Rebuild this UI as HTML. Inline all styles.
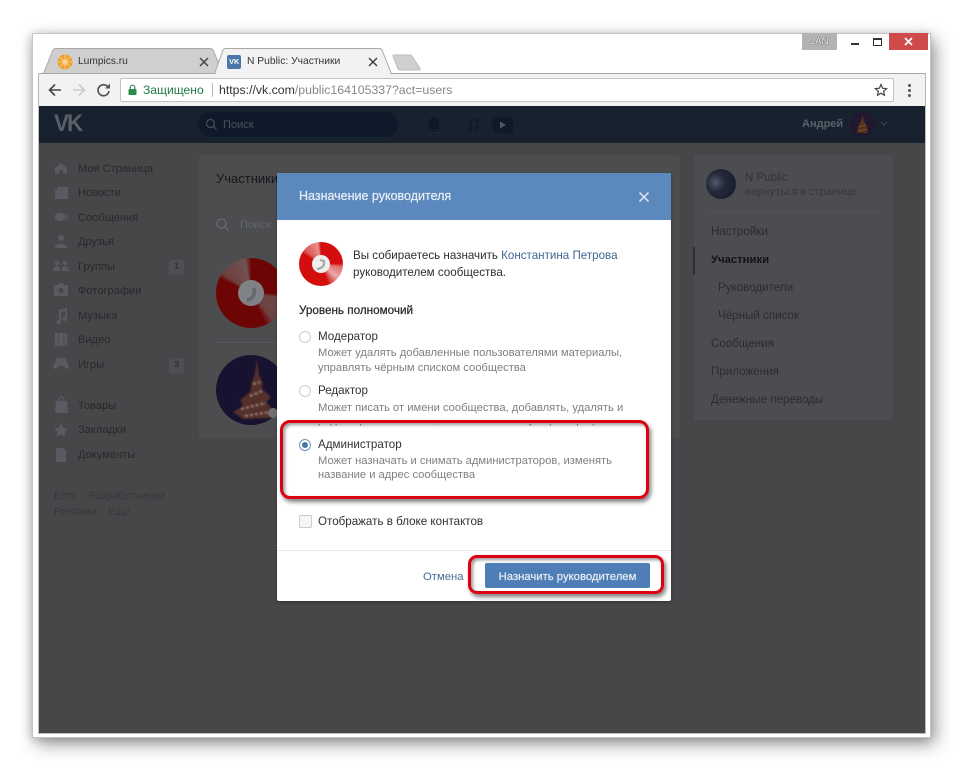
<!DOCTYPE html>
<html><head><meta charset="utf-8">
<style>
html,body{margin:0;padding:0;background:#fff}
#r{position:relative;width:964px;height:771px;overflow:hidden;background:#fff;font-family:"Liberation Sans","Noto Sans CJK JP",sans-serif}
#r div,#r svg{position:absolute}
.t{position:absolute;white-space:nowrap;line-height:16px;height:16px}
.n{left:78px;font-size:11.1px;color:#28292b}
.s{left:711px;font-size:11.6px;color:#2b2c2e}
.g{left:318px;font-size:11.2px;color:#7d7f82;line-height:15px;height:15px}
.d{left:318px;font-size:11.6px;color:#2f3032}
.rad{left:299px;width:10px;height:10px;border:1px solid #c5ccd4;border-radius:50%;background:#fff}
.red{border:3px solid #dc0010;background:transparent;box-shadow:2px 3px 4px rgba(0,0,0,.5),inset 2px 2px 3px rgba(0,0,0,.4)}
</style></head><body>
<div id="r">
<!-- window -->
<div style="left:32px;top:33px;width:899px;height:705px;background:#fff;border:1px solid #c4c4c4;box-sizing:border-box;box-shadow:4px 6px 16px rgba(0,0,0,.42),-2px 1px 8px rgba(0,0,0,.14)"></div>

<!-- tabs + toolbar line -->
<svg style="left:0;top:0" width="964" height="80" viewBox="0 0 964 80">
<path d="M43.500 73.500 L53 50 Q54 48.500 56 48.500 L210 48.500 Q212 48.500 213 50 L223 73.500Z" fill="#cfcfcf" stroke="#a8a8a8"/>
<path d="M38.500 73.500 H926" stroke="#a8a8a8" fill="none"/>
<path d="M214.500 74 L223 50 Q224 48.500 226 48.500 L379 48.500 Q381 48.500 382 50 L391.500 74Z" fill="#f2f2f2" stroke="#a8a8a8"/>
<path d="M216 74 H390" stroke="#f2f2f2" stroke-width="2"/>
<path d="M393 56 Q392.500 55 394 55 L410 55 Q411.500 55 412 56 L420 68.500 Q420.500 70 419 70 L400 70 Q398.500 70 398 69Z" fill="#cfcfcf" stroke="#bdbdbd"/>
</svg>
<div style="left:38px;top:74px;width:888px;height:32px;background:#f2f2f2;border-left:1px solid #b5b5b5;border-right:1px solid #b5b5b5;box-sizing:border-box"></div>
<svg style="left:57px;top:54px" width="16" height="16" viewBox="0 0 16 16"><circle cx="8" cy="8" r="7.500" fill="#f0a030"/><circle cx="8" cy="8" r="3" fill="#f6c870"/><path d="M8 1V15M1 8H15M3 3L13 13M13 3L3 13" stroke="#f9d89a" stroke-width=".7"/></svg>
<span class="t" style="left:78px;top:54px;font-size:10.2px;color:#333">Lumpics.ru</span>
<svg style="left:198px;top:56px" width="12" height="12" viewBox="0 0 12 12"><path d="M2 2L10 10M10 2L2 10" stroke="#444" stroke-width="1.500"/></svg>
<div style="left:227px;top:55px;width:14px;height:14px;background:#4a76a8;border-radius:2px"></div>
<span class="t" style="left:229px;top:54px;font-size:7.500px;font-weight:bold;color:#fff">VK</span>
<span class="t" style="left:247px;top:54px;font-size:10.300px;color:#333">N Public: Участники</span>
<svg style="left:367px;top:56px" width="12" height="12" viewBox="0 0 12 12"><path d="M2 2L10 10M10 2L2 10" stroke="#444" stroke-width="1.500"/></svg>

<!-- window controls -->
<div style="left:802px;top:33px;width:35px;height:17px;background:#b3b3b3"></div>
<span class="t" style="left:802px;top:34px;width:35px;text-align:center;font-size:9.500px;color:#fff;text-shadow:0 0 1px #333,0 0 1px #333">JAN</span>
<div style="left:851px;top:43px;width:8px;height:2px;background:#333"></div>
<div style="left:873px;top:38px;width:9px;height:8px;border:1px solid #333;border-top-width:2px;box-sizing:border-box"></div>
<div style="left:889px;top:33px;width:39px;height:17px;background:#cf4a4a"></div>
<svg style="left:903px;top:36px" width="11" height="11" viewBox="0 0 11 11"><path d="M2 2L9 9M9 2L2 9" stroke="#fff" stroke-width="1.700"/></svg>

<!-- toolbar -->
<svg style="left:46px;top:82px" width="72" height="16" viewBox="0 0 72 16" fill="none">
<path d="M15 8H4M9 2.500L3.500 8L9 13.500" stroke="#444" stroke-width="1.600"/>
<path d="M27 8H38M33 2.500L38.500 8L33 13.500" stroke="#c6c6c6" stroke-width="1.300"/>
<path d="M62 5A5.500 5.500 0 1 0 63 9" stroke="#555" stroke-width="1.700"/><path d="M64 1.500V6.500H59Z" fill="#555"/>
</svg>
<div style="left:120px;top:78px;width:774px;height:24px;background:#fff;border:1px solid #c3c3c3;border-radius:2px;box-sizing:border-box"></div>
<svg style="left:127px;top:84px" width="11" height="12" viewBox="0 0 11 12"><rect x="1.500" y="5" width="8" height="6" rx="1" fill="#2a8a4c"/><path d="M3.200 5.500V3.500a2.300 2.300 0 0 1 4.600 0V5.500" fill="none" stroke="#2a8a4c" stroke-width="1.200"/></svg>
<span class="t" style="left:143px;top:82px;font-size:12.100px;color:#1f7a45">Защищено</span>
<div style="left:212px;top:83px;width:1px;height:14px;background:#bbb"></div>
<span class="t" style="left:219px;top:82px;font-size:12.300px;color:#888"><span style="color:#333">https://vk.com</span>/public164105337?act=users</span>
<svg style="left:874px;top:83px" width="14" height="14" viewBox="0 0 14 14"><path d="M7 1.500L8.600 5.200L12.600 5.600L9.600 8.300L10.500 12.300L7 10.200L3.500 12.300L4.400 8.300L1.400 5.600L5.400 5.200Z" fill="none" stroke="#444" stroke-width="1.200"/></svg>
<div style="left:908px;top:84px;width:3px;height:3px;background:#555;border-radius:50%"></div>
<div style="left:908px;top:89px;width:3px;height:3px;background:#555;border-radius:50%"></div>
<div style="left:908px;top:94px;width:3px;height:3px;background:#555;border-radius:50%"></div>

<!-- page -->
<div style="left:39px;top:106px;width:886px;height:627px;background:#47474a"></div>
<div style="left:38px;top:733px;width:888px;height:1px;background:#bcbcc0"></div>
<div style="left:38px;top:106px;width:1px;height:628px;background:#bcbcc0"></div>
<div style="left:925px;top:106px;width:1px;height:628px;background:#bcbcc0"></div>
<!-- vk header -->
<div style="left:39px;top:106px;width:886px;height:37px;background:#18222f"></div>
<span class="t" style="left:54px;top:113px;font-size:24px;line-height:22px;height:22px;font-weight:bold;color:#585f69;letter-spacing:-2px;transform:scaleX(.93);transform-origin:0 0">VK</span>
<div style="left:198px;top:112px;width:200px;height:25px;border-radius:13px;background:#0e1a29"></div>
<svg style="left:205px;top:118px" width="13" height="13" viewBox="0 0 13 13" fill="none"><circle cx="5.500" cy="5.500" r="4" stroke="#46505c" stroke-width="1.200"/><path d="M8.500 8.500L11.500 11.500" stroke="#46505c" stroke-width="1.200"/></svg>
<span class="t" style="left:223px;top:117px;font-size:11.100px;color:#47515d">Поиск</span>
<svg style="left:425px;top:116px" width="18" height="17" viewBox="0 0 18 17"><path d="M2.500 13C4 11 4 9 4 7C4 3.500 6 1.500 9 1.500C12 1.500 14 3.500 14 7C14 9 14 11 15.500 13Z M7 14H11V15.500H7Z" fill="#0d1824"/></svg>
<svg style="left:465px;top:117px" width="16" height="16" viewBox="0 0 16 16" fill="#101b28"><path d="M5 3L14 1V3L7 4.500V13A2.300 2.200 0 1 1 5 10.800Z M12 2.500H14V11A2.300 2.200 0 1 1 12 8.800Z"/></svg>
<svg style="left:491px;top:116px" width="23" height="18" viewBox="0 0 23 18"><path d="M4 1H22V17H4L0 9Z" fill="#0e1a27"/><path d="M9 5.500L15 9L9 12.500Z" fill="#4d5763"/></svg>
<span class="t" style="left:802px;top:116px;font-size:11px;font-weight:bold;color:#59616b">Андрей</span>
<div style="left:850px;top:112px;width:25px;height:25px;border-radius:50%;background:#211830"></div>
<svg style="left:850px;top:112px" width="25" height="25" viewBox="0 0 25 25"><path d="M12.500 3L14 9L17 15L18 21H7L8 15L11 9Z" fill="#53301f"/><path d="M9 15L16 13M8 19L17 17" stroke="#775033"/></svg>
<svg style="left:880px;top:121px" width="8" height="6" viewBox="0 0 8 6"><path d="M1 1L4 4L7 1" fill="none" stroke="#3c4652"/></svg>

<!-- left nav -->
<span class="t n" style="top:161px">Моя Страница</span>
<span class="t n" style="top:185px">Новости</span>
<span class="t n" style="top:210px">Сообщения</span>
<span class="t n" style="top:234px">Друзья</span>
<span class="t n" style="top:259px">Группы</span>
<span class="t n" style="top:283px">Фотографии</span>
<span class="t n" style="top:308px">Музыка</span>
<span class="t n" style="top:332px">Видео</span>
<span class="t n" style="top:357px">Игры</span>
<span class="t n" style="top:398px">Товары</span>
<span class="t n" style="top:422px">Закладки</span>
<span class="t n" style="top:447px">Документы</span>
<div style="left:169px;top:260px;width:15px;height:15px;background:#4e4f52;border-radius:2px"></div>
<span class="t" style="left:174px;top:259px;font-size:9.500px;font-weight:bold;color:#333">1</span>
<div style="left:169px;top:358px;width:15px;height:15px;background:#4e4f52;border-radius:2px"></div>
<span class="t" style="left:174px;top:357px;font-size:9.500px;font-weight:bold;color:#333">3</span>
<svg style="left:53px;top:160px" width="16" height="305" viewBox="0 0 16 305" fill="#585c62">
<path d="M8 3L14 8.500V13.500H10V10H6V13.500H2V8.500Z"/>
<path d="M4 27H15V39H4Z M2 30H4V39H2Z"/>
<ellipse cx="7" cy="57" rx="5.500" ry="4"/><path d="M13 54Q15 57 13 60" fill="none" stroke="#585c62"/>
<circle cx="8" cy="78" r="3"/><path d="M2 88Q2 84 8 84Q14 84 14 88Z"/>
<circle cx="4" cy="103" r="2.200"/><circle cx="12" cy="103" r="2.200"/><path d="M0 111Q1 106 4 106Q7 106 7 111Z M9 111Q9 106 12 106Q15 106 16 111Z"/>
<path d="M1 125H5L6 123H10L11 125H15V136H1Z"/><circle cx="8" cy="130.500" r="2.500" fill="#47474a"/>
<path d="M6 150L14 148V159A2.300 2 0 1 1 12 157V151L8 152V162A2.300 2 0 1 1 6 160Z"/>
<path d="M2 173H14V186H2Z"/><path d="M5 173V186M11 173V186" stroke="#47474a"/>
<path d="M4 198H12L16 207Q15 210 12 208L11 206H5L4 208Q1 210 0 207Z"/>
<path d="M3 241H14L15 253H2Z"/><path d="M6 241V239Q8.500 235 11 239V241" fill="none" stroke="#585c62" stroke-width="1.300"/>
<path d="M8 263L10 268L15 268.500L11.500 272L12.500 277L8 274.500L3.500 277L4.500 272L1 268.500L6 268Z"/>
<path d="M3 288H10L13 291V302H3Z"/>
</svg>
<span class="t" style="left:54px;top:488px;font-size:10.700px;color:#38393b">Блог</span>
<span class="t" style="left:89px;top:488px;font-size:10.700px;color:#38393b">Разработчикам</span>
<span class="t" style="left:54px;top:504px;font-size:10.700px;color:#38393b">Реклама</span>
<span class="t" style="left:108px;top:504px;font-size:10.700px;color:#38393b">Еще</span>

<!-- center panel -->
<div style="left:199px;top:155px;width:481px;height:283px;background:#4c4d4f;border-radius:2px"></div>
<span class="t" style="left:216px;top:171px;font-size:13px;color:#17181a">Участники</span>
<svg style="left:215px;top:217px" width="15" height="15" viewBox="0 0 15 15" fill="none"><circle cx="6.500" cy="6.500" r="4.500" stroke="#6a6c70" stroke-width="1.300"/><path d="M10 10L13.500 13.500" stroke="#6a6c70" stroke-width="1.300"/></svg>
<span class="t" style="left:240px;top:217px;font-size:11.100px;color:#636568">Поиск</span>
<div style="left:216px;top:342px;width:64px;height:1px;background:#58595c"></div>
<div style="left:216px;top:258px;width:70px;height:70px;border-radius:50%;background:conic-gradient(#6e0505 0 4deg,#6e0505 90deg,#6e4545 100deg,#6a4442 140deg,#6e0505 155deg,#6e0505 295deg,#6e4040 305deg,#705252 350deg,#6e0505 360deg)"></div>
<div style="left:238px;top:280px;width:26px;height:26px;border-radius:50%;background:#808285"></div>
<svg style="left:238px;top:280px" width="26" height="26" viewBox="0 0 26 26"><path d="M9 20Q18 18 16 8" stroke="#666a6e" stroke-width="3.500" fill="none"/></svg>
<div style="left:216px;top:355px;width:70px;height:70px;border-radius:50%;background:#171230"></div>
<svg style="left:216px;top:355px;filter:blur(.8px)" width="70" height="70" viewBox="0 0 70 70"><path d="M41 4L43 20L47 28L46 34L55 42L50 47L58 56L54 63L27 64L17 57L27 51L24 45L34 37L36 27L39 18Z" fill="#54302c"/><path d="M34 41L46 36M25 54L50 48M29 61L54 57M37 29L44 27" stroke="#8f7465" stroke-width="2.500" stroke-dasharray="3 2"/></svg>
<div style="left:268px;top:408px;width:10px;height:10px;border-radius:50%;background:#6f7174"></div>

<!-- right panel -->
<div style="left:694px;top:155px;width:199px;height:265px;background:#4c4d50;border-radius:2px"></div>
<div style="left:706px;top:169px;width:30px;height:30px;border-radius:50%;background:radial-gradient(circle at 32% 45%,#525a68 0,#242a3a 35%,#11152a 100%)"></div>
<span class="t" style="left:745px;top:170px;font-size:11.500px;color:#323336">N Public</span>
<span class="t" style="left:745px;top:184px;font-size:11.200px;color:#37383b">вернуться к странице</span>
<div style="left:707px;top:212px;width:173px;height:1px;background:#525356"></div>
<span class="t s" style="top:224px">Настройки</span>
<span class="t s" style="top:252px;font-weight:bold;color:#121315;font-size:11.300px">Участники</span>
<span class="t s" style="top:280px;left:718px">Руководители</span>
<span class="t s" style="top:308px;left:718px">Чёрный список</span>
<span class="t s" style="top:336px">Сообщения</span>
<span class="t s" style="top:364px">Приложения</span>
<span class="t s" style="top:392px">Денежные переводы</span>
<div style="left:693px;top:247px;width:2px;height:28px;background:#2e2f31"></div>

<!-- modal -->
<div style="left:277px;top:173px;width:394px;height:428px;background:#fff;border-radius:2px;box-shadow:0 1px 3px rgba(0,0,0,.3)"></div>
<div style="left:277px;top:173px;width:394px;height:47px;background:#5b88bd;border-radius:2px 2px 0 0"></div>
<span class="t" style="left:299px;top:188px;font-size:12.500px;color:#eaf0f7;-webkit-text-stroke:.2px #eaf0f7">Назначение руководителя</span>
<svg style="left:638px;top:191px" width="12" height="12" viewBox="0 0 12 12"><path d="M1.500 1.500L10.500 10.500M10.500 1.500L1.500 10.500" stroke="#dfe8f2" stroke-width="1.500"/></svg>
<div style="left:299px;top:242px;width:44px;height:44px;border-radius:50%;background:conic-gradient(#d40d0d 0 4deg,#d40d0d 88deg,#e27070 98deg,#eaa8a8 130deg,#d83030 155deg,#d40d0d 160deg,#d40d0d 300deg,#dd5555 310deg,#e89090 350deg,#d40d0d 360deg)"></div>
<div style="left:312px;top:255px;width:18px;height:18px;border-radius:50%;background:#efefef"></div>
<svg style="left:312px;top:255px" width="18" height="18" viewBox="0 0 18 18"><path d="M5 14Q13 13 12 6L8 5" stroke="#a8a8a8" stroke-width="2.300" fill="none"/></svg>
<span class="t" style="left:353px;top:248px;font-size:11.600px;color:#2c2d2f">Вы собираетесь назначить <span style="color:#3f6690">Константина Петрова</span></span>
<span class="t" style="left:353px;top:265px;font-size:11.600px;color:#2c2d2f">руководителем сообщества.</span>
<span class="t" style="left:299px;top:303px;font-size:11.700px;color:#2a2b2d;-webkit-text-stroke:.25px #2a2b2d">Уровень полномочий</span>
<div class="rad" style="top:331px"></div>
<span class="t d" style="top:329px">Модератор</span>
<span class="t g" style="top:346px">Может удалять добавленные пользователями материалы,</span>
<span class="t g" style="top:361px">управлять чёрным списком сообщества</span>
<div class="rad" style="top:385px"></div>
<span class="t d" style="top:383px">Редактор</span>
<span class="t g" style="top:401px">Может писать от имени сообщества, добавлять, удалять и</span>
<span class="t g" style="top:413px">редактировать контент, обновлять главную фотографию</span>
<div style="left:283px;top:415px;width:366px;height:9px;background:#fff"></div>
<div style="left:285px;top:428px;width:356px;height:8px;background:#fff"></div>
<div class="rad" style="top:439px;border-color:#6f93bd"></div>
<div style="left:302px;top:442px;width:6px;height:6px;border-radius:50%;background:#4a76a8"></div>
<span class="t d" style="top:437px">Администратор</span>
<span class="t g" style="top:454px">Может назначать и снимать администраторов, изменять</span>
<span class="t g" style="top:468px">название и адрес сообщества</span>
<div class="red" style="left:280px;top:420px;width:363px;height:73px;border-radius:10px"></div>
<div style="left:299px;top:515px;width:11px;height:11px;border:1px solid #c5ccd4;border-radius:2px;background:#f4f6f8"></div>
<span class="t d" style="top:514px">Отображать в блоке контактов</span>
<div style="left:277px;top:550px;width:394px;height:1px;background:#e7e8ec"></div>
<span class="t" style="left:423px;top:569px;font-size:11.300px;color:#4a6c91">Отмена</span>
<div style="left:485px;top:563px;width:165px;height:25px;background:#4f7db5;border-radius:2px"></div>
<span class="t" style="left:485px;top:569px;width:165px;text-align:center;font-size:11.300px;color:#e8eef5;-webkit-text-stroke:.2px #e8eef5">Назначить руководителем</span>
<div class="red" style="left:468px;top:555px;width:190px;height:33px;border-radius:9px"></div>
</div>
</body></html>
